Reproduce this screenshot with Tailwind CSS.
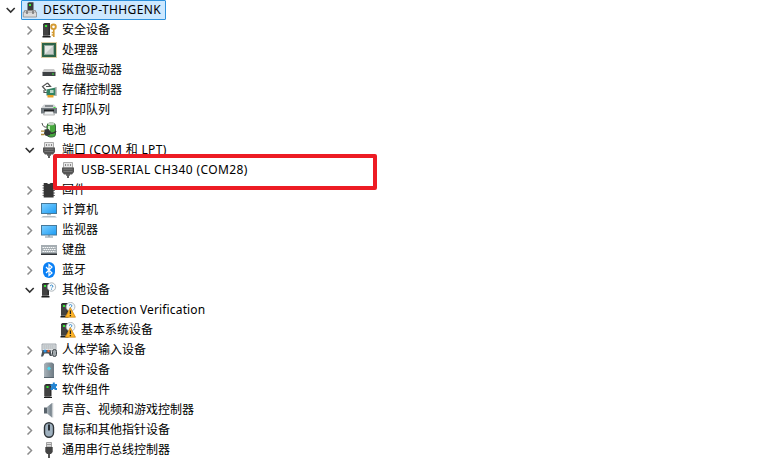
<!DOCTYPE html>
<html lang="zh-CN">
<head>
<meta charset="utf-8">
<title>设备管理器</title>
<script src="https://cdn.jsdelivr.net/npm/@tailwindcss/browser@4"></script>
</head>
<body class="relative w-[758px] h-[461px] overflow-hidden bg-white text-black text-[12px] leading-5 font-['Noto_Sans','Noto_Sans_CJK_SC',sans-serif]">
<svg class="absolute size-0">
  <defs>
    <linearGradient id="blue" x1="0" y1="0" x2="1" y2="1"><stop offset="0" stop-color="#7fd0ff"/><stop offset="1" stop-color="#1b9cf5"/></linearGradient>
    <linearGradient id="steel" x1="0" y1="0" x2="1" y2="0"><stop offset="0" stop-color="#a9b3ba"/><stop offset="1" stop-color="#6d7a83"/></linearGradient>
    <symbol id="right" viewBox="0 0 10 10"><path d="M2.500 1.500L6.500 5.500L2.500 9.500" fill="none" stroke="#8c8c8c" stroke-width="1.500"/></symbol>
    <symbol id="down" viewBox="0 0 10 10"><path d="M.7 3L4.700 7L8.700 3" fill="none" stroke="#303030" stroke-width="1.600"/></symbol>
    <symbol id="tower" viewBox="0 0 16 16"><path d="M2 2L3.500 1H9v12.500H2z" fill="#2c2c2c"/><path d="M2 2.500h5.500v11H2z" fill="#424242"/><path d="M1.500 14h8v1.500h-8z" fill="#1b1b1b"/><path d="M4 3h2v2H4z" fill="#35e835"/></symbol>
    <symbol id="port" viewBox="0 0 16 16"><path d="M3.500.5h9V6h-9z" fill="#e8e8e8" stroke="#999" stroke-width=".8"/><path d="M5.500 2v2M8 2v2M10.500 2v2" stroke="#888"/><path d="M2 5.500h12v4.500l-2 2.500H4L2 10z" fill="#555"/><path d="M3.500 7.200h9M3.500 9.500h9" stroke="#808080" stroke-width=".8"/><path d="M6 12h4v1.800H9V16H7v-2.200H6z" fill="#606060"/></symbol>
    <symbol id="warn" viewBox="0 0 16 16"><use href="#tower" x="-1"/><circle cx="10.500" cy="4.800" r="4.400" fill="#f5f8fa" stroke="#a5adb2" stroke-width=".8"/><path d="M9 3.500q1.500-2 3 0q0 1-1.500 2" fill="none" stroke="#3d8fce"/><path d="M10.300 5.500L5.300 15.200h10.200z" fill="#ffb526" stroke="#c98113" stroke-width=".7"/><path d="M10.400 8.500v3.500M10.400 13v1.300" stroke="#222" stroke-width="1.300"/></symbol>
  </defs>
</svg>

<div class="flex h-5 items-start pl-[6px]">
  <svg class="mt-[5px] size-[10px]"><use href="#down"/></svg>
  <div class="ml-[5px] flex h-5 w-[145px] items-center border border-[#2d91dc] bg-[#cce8ff] rounded-[1px]">
    <svg class="size-4 shrink-0" viewBox="0 0 16 16"><path d="M5.500 1L7 .3h4.500V9h-6z" fill="#3b3b3b"/><path d="M7 2h2v2H7z" fill="#35e835"/><path d="M2.500 8.500h11V11H2.500z" fill="#f5f5f5" stroke="#858585" stroke-width=".8"/><path d="M1.300 10h13.200v5H1.300z" fill="#dcdcdc" stroke="#8a8a8a" stroke-width=".8"/><path d="M5 9v3M11 9v3" stroke="#666" stroke-width="1.300"/></svg>
    <span class="ml-[5px] whitespace-nowrap tracking-[0.38px]">DESKTOP-THHGENK</span>
  </div>
</div>

<div class="pl-[25px] [&>div]:flex [&>div]:h-5 [&>div]:items-center [&>div>svg:first-child]:size-[10px] [&>div>svg+svg]:size-4 [&>div>svg+svg]:ml-[6px] [&>div>span]:ml-[5px] [&>div>span]:whitespace-nowrap">
  <div><svg><use href="#right"/></svg><svg viewBox="0 0 16 16"><use href="#tower"/><circle cx="12.500" cy="4.800" r="2.300" fill="none" stroke="#d39a32" stroke-width="1.900"/><path d="M12.800 7v8M12.500 10.500h-1.800M12.500 13h-1.800" stroke="#d39a32" stroke-width="1.600"/></svg><span>安全设备</span></div>
  <div><svg><use href="#right"/></svg><svg viewBox="0 0 16 16"><rect x=".5" y=".5" width="15" height="15" fill="none" stroke="#b79a4a" stroke-dasharray="1 1"/><rect x="1" y="1" width="14" height="14" fill="#2c6348"/><rect x="3.500" y="3.500" width="9" height="9" fill="#e6e9e7" stroke="#8fa69a"/><path d="M4 12L12 4v8z" fill="#c8cdca"/></svg><span>处理器</span></div>
  <div><svg><use href="#right"/></svg><svg viewBox="0 0 16 16"><path d="M3 7h10l2 3.500H1z" fill="#c9c9c9"/><path d="M1.500 10h13v4h-13z" fill="#3e4144"/><path d="M11 11.500h2v1h-2z" fill="#35e835"/></svg><span>磁盘驱动器</span></div>
  <div><svg><use href="#right"/></svg><svg viewBox="0 0 16 16"><path d="M6.500 1L1.500 4.500L5 8.500M5 4.500h4.500L6.500 1M3 8v2.500h3" fill="none" stroke="#555" stroke-width="1.200"/><path d="M5.500 7.500l9-2v8h-9z" fill="#348464"/><path d="M9 8h3.500v3H9z" fill="#b9d7c9"/><path d="M15 5v9" stroke="#888"/><path d="M6.500 13h6v2.500h-6z" fill="#e8a126"/></svg><span>存储控制器</span></div>
  <div><svg><use href="#right"/></svg><svg viewBox="0 0 16 16"><path d="M3 2.500h10l3 3.500H0z" fill="#d1d4d6"/><path d="M4 3h8v2H4z" fill="#858b8f"/><path d="M0 6h16v5.500H0z" fill="#747c81"/><path d="M3 7.500h10v2H3z" fill="#1d2022"/><path d="M4 9.500h8l1.500 3.500h-11z" fill="#edf0f1" stroke="#777" stroke-width=".5"/><path d="M12.500 5h2v1h-2z" fill="#35e835"/></svg><span>打印队列</span></div>
  <div><svg><use href="#right"/></svg><svg viewBox="0 0 16 16"><rect x="6" y="1" width="8.500" height="14" rx="3" fill="#45a83c" stroke="#3b6840"/><ellipse cx="10.200" cy="1.700" rx="3.300" ry="1.500" fill="#c6d2c5"/><path d="M8 4v5" stroke="#d3f5cb" stroke-width="1.800"/><path d="M1 1q1 5 5 4" fill="none" stroke="#555"/><path d="M3.500 7.500l4-.5l2.500 3l-1 3l-4 1l-2-2z" fill="#343738"/><path d="M0 9.200h3.500M0 12.500h3.500" stroke="#b08d3a" stroke-width="1.300"/><path d="M9.500 11q4 1 5.500-2" fill="none" stroke="#333" stroke-width="1.500"/></svg><span>电池</span></div>
  <div><svg><use href="#down"/></svg><svg><use href="#port"/></svg><span>端口<span class="tracking-[0.4px]"> (COM </span>和<span class="tracking-[0.4px]"> LPT)</span></span></div>
  <div class="pl-[19px]"><svg></svg><svg><use href="#port"/></svg><span class="tracking-[0.38px]">USB-SERIAL CH340 (COM28)</span></div>
  <div><svg><use href="#right"/></svg><svg viewBox="0 0 16 16"><path d="M1.500 3.500h12.500M1.500 6h12.500M1.500 8.500h12.500M1.500 11h12.500M1.500 13.500h12.500" stroke="#777"/><path d="M2.700 1H6q1.800 2 3.600 0h3v14.500H2.700z" fill="#353535"/></svg><span>固件</span></div>
  <div><svg><use href="#right"/></svg><svg viewBox="0 0 16 16"><rect x=".5" y="1.500" width="15" height="10" fill="url(#blue)" stroke="#46799a"/><path d="M6 12.700h4" stroke="#9aa6ad"/><path d="M2 14h12l2 1.500H0z" fill="#b3bdc4"/></svg><span>计算机</span></div>
  <div><svg><use href="#right"/></svg><svg viewBox="0 0 16 16"><rect x=".5" y="3.500" width="15" height="9.500" fill="url(#blue)" stroke="#46799a"/><path d="M7 13h2v1.500H7z" fill="#899aa5"/><path d="M4 15h8" stroke="#7f919c"/></svg><span>监视器</span></div>
  <div><svg><use href="#right"/></svg><svg viewBox="0 0 16 16"><path d="M0 3h16v9H0z" fill="#a5adb2"/><path d="M1.500 5.500h13M2.500 7.500h12M1.500 9.500h13" stroke="#f6f8f9" stroke-dasharray="1.500 .6"/><path d="M0 11.500h16V13H0z" fill="#303438"/></svg><span>键盘</span></div>
  <div><svg><use href="#right"/></svg><svg viewBox="0 0 16 16"><rect x="2" width="12" height="16" rx="6" fill="#0a80f5"/><path d="M5 5l6 6l-3 2.500v-11L11 5l-6 6" fill="none" stroke="#fff" stroke-width="1.200"/></svg><span>蓝牙</span></div>
  <div><svg><use href="#down"/></svg><svg viewBox="0 0 16 16"><use href="#tower" x="-1"/><circle cx="10.500" cy="5" r="4.200" fill="#f8fafb" stroke="#9da7ad" stroke-width=".8"/><path d="M9 4q1.500-2 3 0q0 1-1.500 2M10.500 6.700v1" fill="none" stroke="#3d8fce"/></svg><span>其他设备</span></div>
  <div class="pl-[19px]"><svg></svg><svg><use href="#warn"/></svg><span class="tracking-[0.14px]">Detection Verification</span></div>
  <div class="pl-[19px]"><svg></svg><svg><use href="#warn"/></svg><span>基本系统设备</span></div>
  <div><svg><use href="#right"/></svg><svg viewBox="0 0 16 16"><path d="M1 2h14v7H1z" fill="#e1e4e6" stroke="#8d969c" stroke-width=".8"/><path d="M2.500 4h11M2.500 6h11" stroke="#858e94" stroke-dasharray="1.200 .8"/><path d="M1.500 8h8l1.500 6H9L7.500 11.500h-4L2 14.500H0z" fill="#4b5358"/><circle cx="4" cy="9" r="1.500" fill="#2e94e5"/><circle cx="7.500" cy="9" r="1.200" fill="#e66133"/><rect x="11.500" y="7.500" width="4" height="7" rx="2" fill="#a1a8ac" stroke="#3f464b"/></svg><span>人体学输入设备</span></div>
  <div><svg><use href="#right"/></svg><svg viewBox="0 0 16 16"><path d="M3 2l2-1.500h6L13 2v13H3z" fill="url(#steel)"/><path d="M3 15h10v1H3z" fill="#59656e"/><path d="M8 4.500l2 2l-2 2l-2-2z" fill="#49dcf3"/></svg><span>软件设备</span></div>
  <div><svg><use href="#right"/></svg><svg viewBox="0 0 16 16"><use href="#tower" x="1.500" y="1"/><path d="M9.500 2h2.300V.5h2V2H16v2.300h-1V6h1v2h-2.500V7h-1.500v1H9.500V5.500h1V4h-1z" fill="#2486d4"/></svg><span>软件组件</span></div>
  <div><svg><use href="#right"/></svg><svg viewBox="0 0 16 16"><path d="M3 5.500h3v6H3z" fill="#59636b"/><path d="M6 5l5-4v14.500l-5-4z" fill="url(#steel)"/><path d="M11.500 1v14.500" stroke="#c9ced1" stroke-width="1.500"/></svg><span>声音、视频和游戏控制器</span></div>
  <div><svg><use href="#right"/></svg><svg viewBox="0 0 16 16"><rect x="3.500" y=".7" width="9" height="14.600" rx="4.500" fill="#9fb1bf" stroke="#2f353a" stroke-width="1.400"/><path d="M8 2.500v6" stroke="#1e2327" stroke-width="1.800"/></svg><span>鼠标和其他指针设备</span></div>
  <div><svg><use href="#right"/></svg><svg viewBox="0 0 16 16"><path d="M5.500.5h5V5h-5z" fill="#ddd" stroke="#8b8b8b" stroke-width=".8"/><path d="M7 2v1M9 2v1" stroke="#555"/><path d="M4.300 5h7.400v5l-1.700 2H6l-1.700-2z" fill="#444"/><path d="M7 12h2v4H7z" fill="#555"/></svg><span>通用串行总线控制器</span></div>
</div>

<div class="absolute left-[53px] top-[154px] h-9 w-[324px] rounded-[2px] border-4 border-[#ed1c24]"></div>
</body>
</html>
